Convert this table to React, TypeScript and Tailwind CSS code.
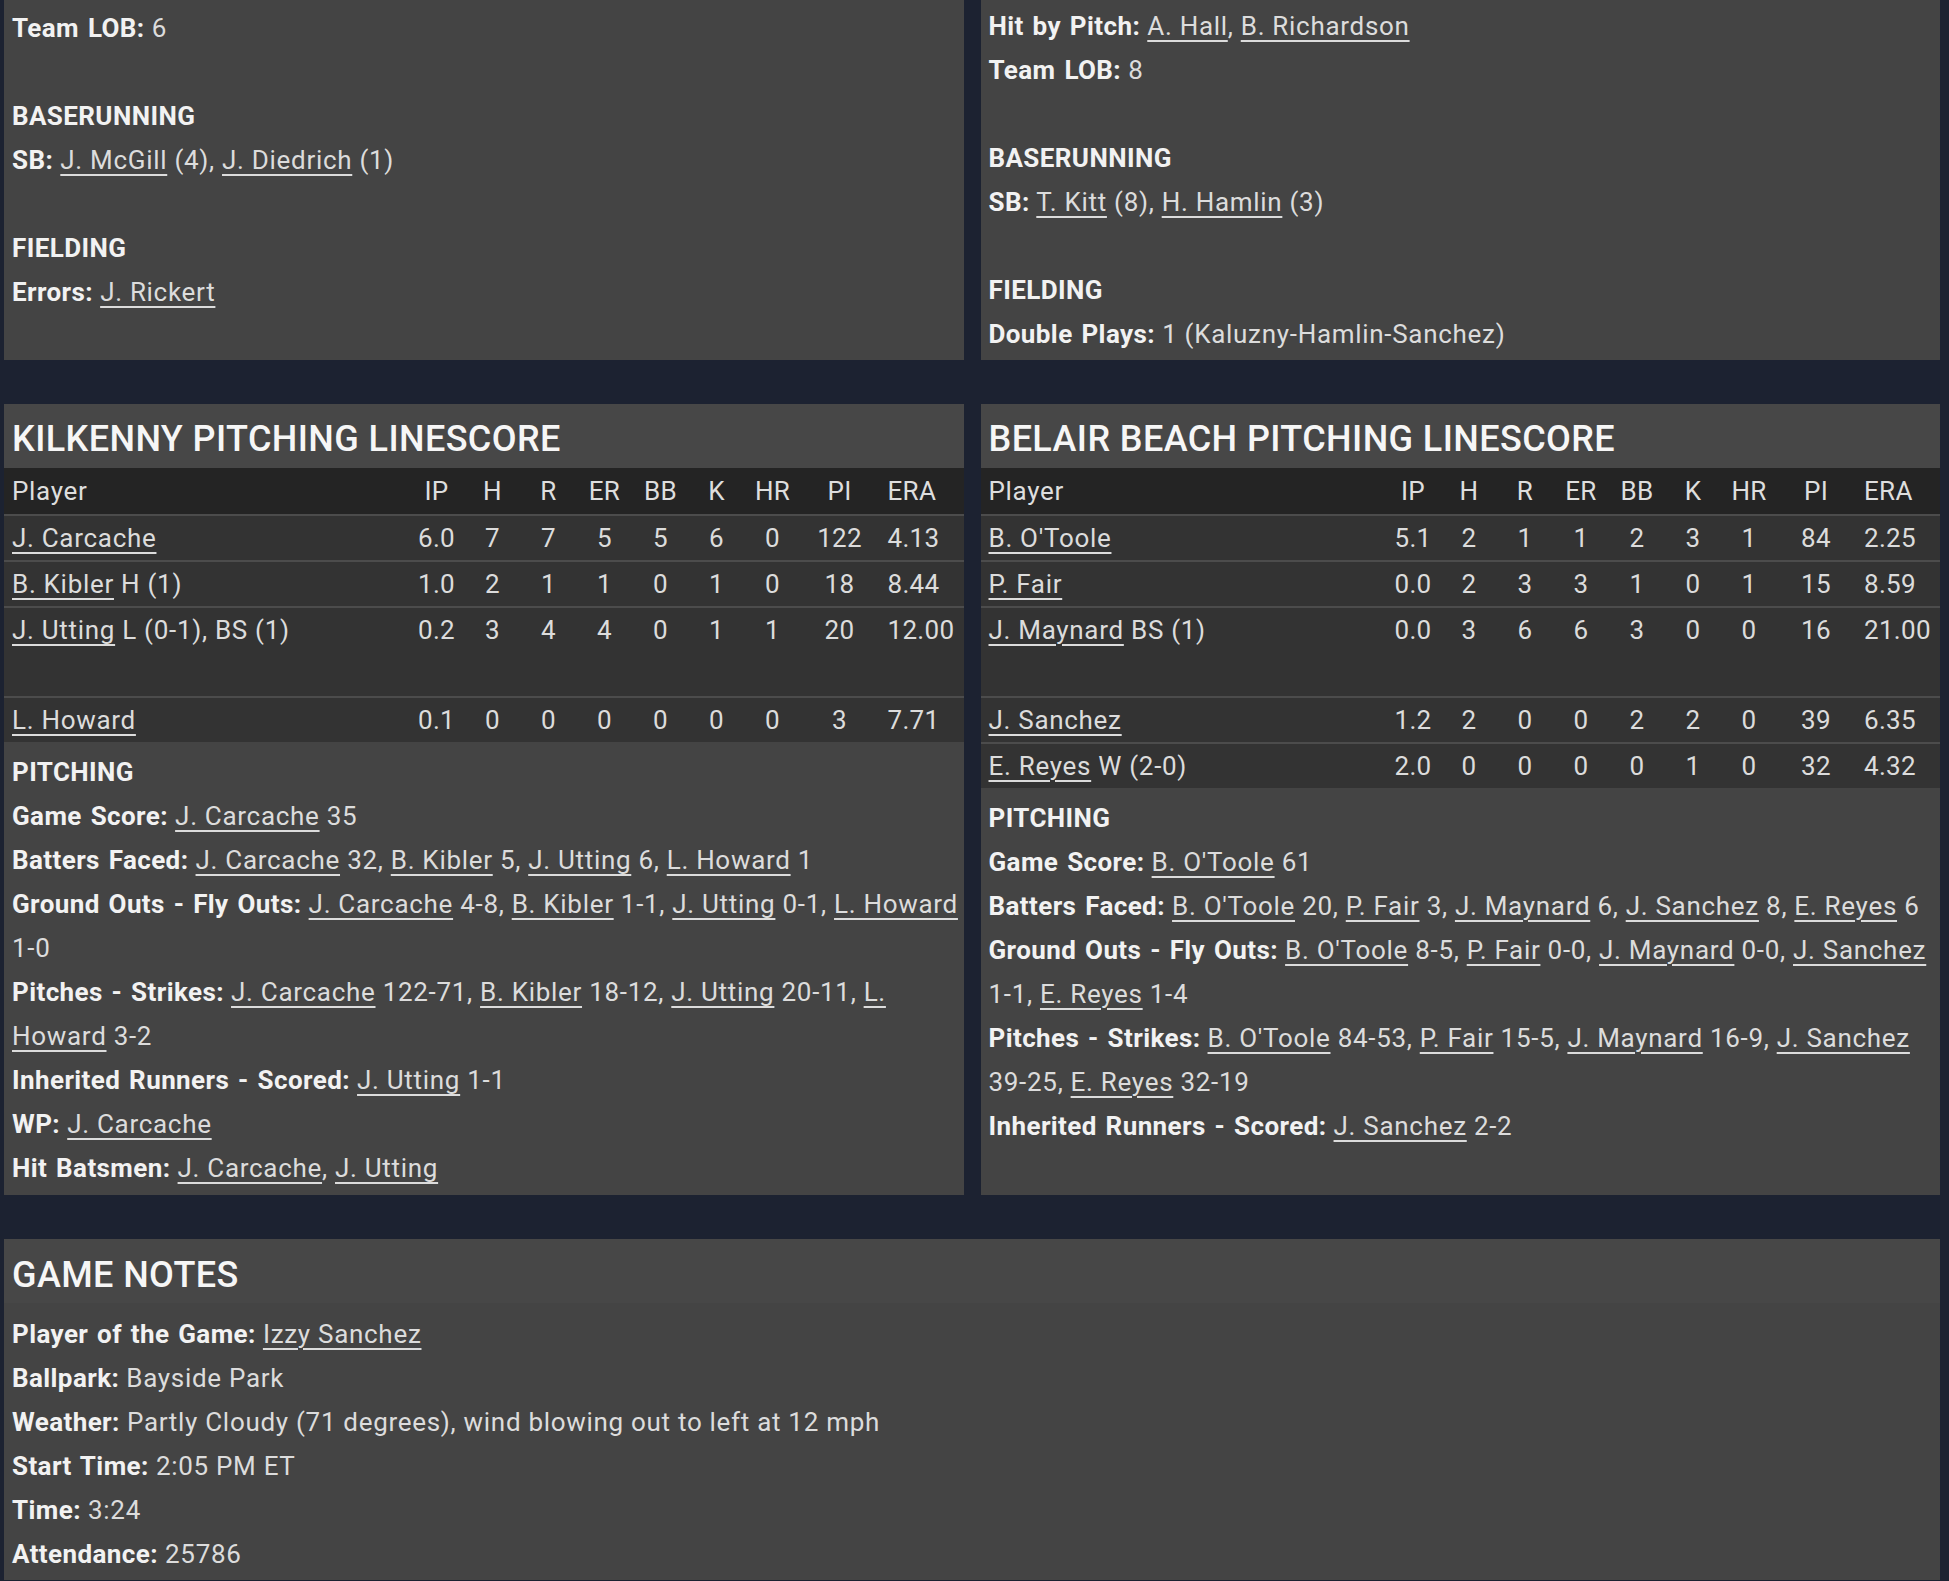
import React from "react";

const L = ({ children }: { children: React.ReactNode }) => (
  <span className="underline decoration-2 underline-offset-[5px]">{children}</span>
);

const Line = ({ label, children }: { label: string; children?: React.ReactNode }) => (
  <div className="leading-[44px]">
    <span className="font-bold text-[#f2f2f2] tracking-[0.4px] [word-spacing:2px]">{label}</span> {children}
  </div>
);

const Head = ({ children }: { children: React.ReactNode }) => (
  <div className="leading-[44px] font-bold text-[#f2f2f2] tracking-[0.4px]">{children}</div>
);

const Blank = () => <div className="h-[44px]" />;

type Row = { name: React.ReactNode; stats: string[]; tall?: boolean };

const GRID = "grid grid-cols-[1fr_56px_56px_56px_56px_56px_56px_56px_78px_85px]";

const StatCells = ({ stats }: { stats: string[] }) => (
  <>
    {stats.slice(0, 8).map((s, i) => (
      <div key={i} className="text-center whitespace-nowrap tracking-[0.3px]">
        {s}
      </div>
    ))}
    <div className="pl-[9px] whitespace-nowrap tracking-[0.3px]">{stats[8]}</div>
  </>
);

const Table = ({ title, rows }: { title: string; rows: Row[] }) => (
  <div>
    <div className="h-[64px] flex items-center pl-[8px] pt-[6px] text-[36px] font-medium tracking-[0.4px] text-[#f6f6f6] bg-[#474747]">
      {title}
    </div>
    <div className={`${GRID} h-[46px] items-center bg-[#242424] text-[#dedede]`}>
      <div className="pl-[8px]">Player</div>
      <StatCells stats={["IP", "H", "R", "ER", "BB", "K", "HR", "PI", "ERA"]} />
    </div>
    {rows.map((r, i) => (
      <div
        key={i}
        className={`${GRID} border-t-2 border-[#4c4c4c] bg-[#333333] leading-[44px] ${
          r.tall ? "h-[90px]" : "h-[46px]"
        } items-start`}
      >
        <div className="pl-[8px] whitespace-nowrap">{r.name}</div>
        <StatCells stats={r.stats} />
      </div>
    ))}
  </div>
);

export default function App() {
  return (
    <div className="min-h-screen bg-[#1c2231] pl-[4px] pr-[9px] font-['Roboto',sans-serif] text-[26px] tracking-[0.7px] text-[#dcdcdc] overflow-hidden">
      {/* Top panels */}
      <div className="grid grid-cols-2 gap-x-[17px]">
        <div className="bg-[#444444] pt-[6px] pb-[4px] pl-[8px] pr-[2px]">
          <Line label="Team LOB:">6</Line>
          <Blank />
          <Head>BASERUNNING</Head>
          <Line label="SB:">
            <L>J. McGill</L> (4), <L>J. Diedrich</L> (1)
          </Line>
          <Blank />
          <Head>FIELDING</Head>
          <Line label="Errors:">
            <L>J. Rickert</L>
          </Line>
        </div>
        <div className="bg-[#444444] pt-[4px] pb-[4px] pl-[8px] pr-[2px]">
          <Line label="Hit by Pitch:">
            <L>A. Hall</L>, <L>B. Richardson</L>
          </Line>
          <Line label="Team LOB:">8</Line>
          <Blank />
          <Head>BASERUNNING</Head>
          <Line label="SB:">
            <L>T. Kitt</L> (8), <L>H. Hamlin</L> (3)
          </Line>
          <Blank />
          <Head>FIELDING</Head>
          <Line label="Double Plays:">1 (Kaluzny-Hamlin-Sanchez)</Line>
        </div>
      </div>

      {/* Pitching panels */}
      <div className="mt-[44px] grid grid-cols-2 gap-x-[17px]">
        <div className="bg-[#444444]">
          <Table
            title="KILKENNY PITCHING LINESCORE"
            rows={[
              { name: <L>J. Carcache</L>, stats: ["6.0", "7", "7", "5", "5", "6", "0", "122", "4.13"] },
              { name: <><L>B. Kibler</L> H (1)</>, stats: ["1.0", "2", "1", "1", "0", "1", "0", "18", "8.44"] },
              {
                name: <><L>J. Utting</L> L (0-1), BS (1)</>,
                stats: ["0.2", "3", "4", "4", "0", "1", "1", "20", "12.00"],
                tall: true,
              },
              { name: <L>L. Howard</L>, stats: ["0.1", "0", "0", "0", "0", "0", "0", "3", "7.71"] },
            ]}
          />
          <div className="pt-[8px] pb-[5px] pl-[8px] pr-[2px]">
            <Head>PITCHING</Head>
            <Line label="Game Score:">
              <L>J. Carcache</L> 35
            </Line>
            <Line label="Batters Faced:">
              <L>J. Carcache</L> 32, <L>B. Kibler</L> 5, <L>J. Utting</L> 6, <L>L. Howard</L> 1
            </Line>
            <Line label="Ground Outs - Fly Outs:">
              <L>J. Carcache</L> 4-8, <L>B. Kibler</L> 1-1, <L>J. Utting</L> 0-1, <L>L. Howard</L> 1-0
            </Line>
            <Line label="Pitches - Strikes:">
              <L>J. Carcache</L> 122-71, <L>B. Kibler</L> 18-12, <L>J. Utting</L> 20-11, <L>L.</L> <L>Howard</L> 3-2
            </Line>
            <Line label="Inherited Runners - Scored:">
              <L>J. Utting</L> 1-1
            </Line>
            <Line label="WP:">
              <L>J. Carcache</L>
            </Line>
            <Line label="Hit Batsmen:">
              <L>J. Carcache</L>, <L>J. Utting</L>
            </Line>
          </div>
        </div>
        <div className="bg-[#444444]">
          <Table
            title="BELAIR BEACH PITCHING LINESCORE"
            rows={[
              { name: <L>B. O'Toole</L>, stats: ["5.1", "2", "1", "1", "2", "3", "1", "84", "2.25"] },
              { name: <L>P. Fair</L>, stats: ["0.0", "2", "3", "3", "1", "0", "1", "15", "8.59"] },
              {
                name: <><L>J. Maynard</L> BS (1)</>,
                stats: ["0.0", "3", "6", "6", "3", "0", "0", "16", "21.00"],
                tall: true,
              },
              { name: <L>J. Sanchez</L>, stats: ["1.2", "2", "0", "0", "2", "2", "0", "39", "6.35"] },
              { name: <><L>E. Reyes</L> W (2-0)</>, stats: ["2.0", "0", "0", "0", "0", "1", "0", "32", "4.32"] },
            ]}
          />
          <div className="pt-[8px] pb-[5px] pl-[8px] pr-[2px]">
            <Head>PITCHING</Head>
            <Line label="Game Score:">
              <L>B. O'Toole</L> 61
            </Line>
            <Line label="Batters Faced:">
              <L>B. O'Toole</L> 20, <L>P. Fair</L> 3, <L>J. Maynard</L> 6, <L>J. Sanchez</L> 8, <L>E. Reyes</L> 6
            </Line>
            <Line label="Ground Outs - Fly Outs:">
              <L>B. O'Toole</L> 8-5, <L>P. Fair</L> 0-0, <L>J. Maynard</L> 0-0, <L>J. Sanchez</L> 1-1, <L>E. Reyes</L> 1-4
            </Line>
            <Line label="Pitches - Strikes:">
              <L>B. O'Toole</L> 84-53, <L>P. Fair</L> 15-5, <L>J. Maynard</L> 16-9, <L>J. Sanchez</L> 39-25,{" "}
              <L>E. Reyes</L> 32-19
            </Line>
            <Line label="Inherited Runners - Scored:">
              <L>J. Sanchez</L> 2-2
            </Line>
          </div>
        </div>
      </div>

      {/* Game notes */}
      <div className="mt-[44px] bg-[#444444]">
        <div className="h-[64px] flex items-center pl-[8px] pt-[8px] text-[36px] font-medium tracking-[0.4px] text-[#f6f6f6] bg-[#474747]">
          GAME NOTES
        </div>
        <div className="pt-[9px] pl-[8px] pr-[2px] pb-[4px]">
          <Line label="Player of the Game:">
            <L>Izzy Sanchez</L>
          </Line>
          <Line label="Ballpark:">Bayside Park</Line>
          <Line label="Weather:">Partly Cloudy (71 degrees), wind blowing out to left at 12 mph</Line>
          <Line label="Start Time:">2:05 PM ET</Line>
          <Line label="Time:">3:24</Line>
          <Line label="Attendance:">25786</Line>
        </div>
      </div>
    </div>
  );
}
